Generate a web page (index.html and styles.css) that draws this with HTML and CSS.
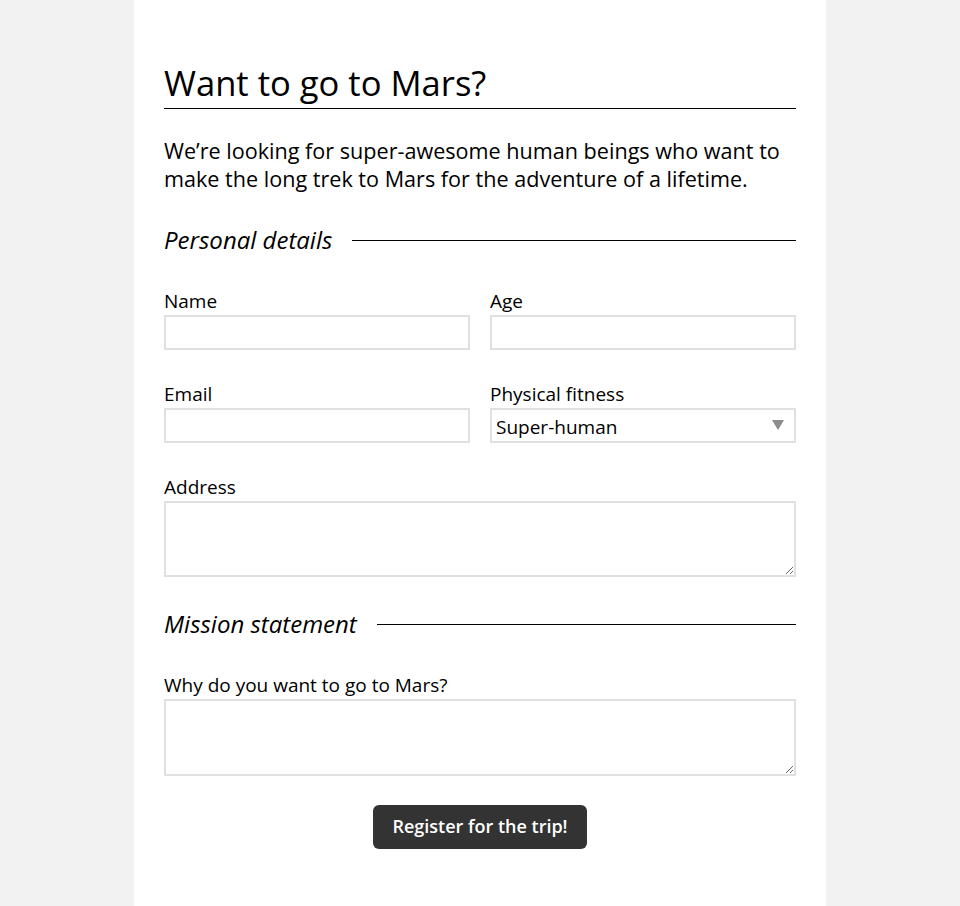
FILE: index.html
```html
<!DOCTYPE html>
<html lang="en">
<head>
<meta charset="utf-8">
<title>Want to go to Mars?</title>
<link rel="stylesheet" href="styles.css">
</head>
<body>
<main class="page">
  <h1 class="title">Want to go to Mars?</h1>
  <p class="intro">We’re looking for super-awesome human beings who want to make the long trek to Mars for the adventure of a lifetime.</p>

  <form class="form">
    <section class="section">
      <h2 class="section-title"><span>Personal details</span></h2>
      <div class="grid">
        <div class="field">
          <label class="label" for="name">Name</label>
          <input class="input" id="name" type="text">
        </div>
        <div class="field">
          <label class="label" for="age">Age</label>
          <input class="input" id="age" type="text">
        </div>
        <div class="field">
          <label class="label" for="email">Email</label>
          <input class="input" id="email" type="text">
        </div>
        <div class="field">
          <label class="label" for="fitness">Physical fitness</label>
          <div class="select-wrap">
            <select class="input select" id="fitness">
              <option>Super-human</option>
              <option>Fit</option>
              <option>Average</option>
            </select>
          </div>
        </div>
        <div class="field field-wide">
          <label class="label" for="address">Address</label>
          <textarea class="input textarea" id="address"></textarea>
        </div>
      </div>
    </section>

    <section class="section">
      <h2 class="section-title"><span>Mission statement</span></h2>
      <div class="grid">
        <div class="field field-wide">
          <label class="label" for="why">Why do you want to go to Mars?</label>
          <textarea class="input textarea" id="why"></textarea>
        </div>
      </div>
    </section>

    <div class="actions">
      <button class="button" type="button">Register for the trip!</button>
    </div>
  </form>
</main>
</body>
</html>
```

FILE: styles.css
```css
* {
  box-sizing: border-box;
}

html, body {
  margin: 0;
  padding: 0;
}

body {
  background: #f2f2f2;
  font-family: "Open Sans", "Liberation Sans", sans-serif;
  color: #000;
}

.page {
  width: 692px;
  min-height: 906px;
  margin: 0 auto;
  background: #fff;
  padding: 61px 30px 40px;
}

.title {
  margin: 0;
  font-size: 34.6px;
  font-weight: 400;
  line-height: 43px;
  padding-bottom: 4px;
  border-bottom: 1px solid #000;
}

.intro {
  margin: 28px 0 0;
  font-size: 21.6px;
  line-height: 28px;
}

.form {
  margin: 0;
}

.section {
  margin-top: 30px;
}

.section-title {
  display: flex;
  align-items: center;
  margin: 0;
  font-size: 24px;
  font-style: italic;
  font-weight: 400;
  line-height: 34px;
}

.section-title::after {
  content: "";
  flex: 1;
  height: 1px;
  background: #000;
  margin-left: 20px;
}

.grid {
  display: grid;
  grid-template-columns: 1fr 1fr;
  column-gap: 20px;
  row-gap: 30px;
  margin-top: 30px;
}

.field {
  display: flex;
  flex-direction: column;
}

.field-wide {
  grid-column: 1 / -1;
}

.label {
  display: block;
  font-size: 19px;
  line-height: 27px;
  padding-top: 1px;
}

.input {
  display: block;
  width: 100%;
  height: 35px;
  margin: 0;
  border: 2px solid #e0e0e0;
  border-radius: 0;
  background: #fff;
  font-family: "Open Sans", "Liberation Sans", sans-serif;
  font-size: 19px;
  color: #000;
  padding: 0 4px;
  outline: none;
}

.select-wrap {
  position: relative;
}

.select {
  -webkit-appearance: none;
  appearance: none;
  padding: 3px 30px 0 4px;
  line-height: 28px;
}

.select-wrap::after {
  content: "";
  position: absolute;
  right: 12px;
  top: 12px;
  width: 0;
  height: 0;
  border-left: 6px solid transparent;
  border-right: 6px solid transparent;
  border-top: 10px solid #8c8c8c;
  pointer-events: none;
}

.textarea {
  height: 76px;
  resize: vertical;
  padding: 4px;
}

.section + .section .textarea {
  height: 77px;
}

.actions {
  display: flex;
  justify-content: center;
  margin-top: 29px;
}

.button {
  height: 44px;
  padding: 0 19px 2px;
  border: 0;
  border-radius: 6px;
  background: #333;
  color: #fff;
  font-family: "Open Sans", "Liberation Sans", sans-serif;
  font-size: 18px;
  font-weight: 600;
  cursor: pointer;
}
```
